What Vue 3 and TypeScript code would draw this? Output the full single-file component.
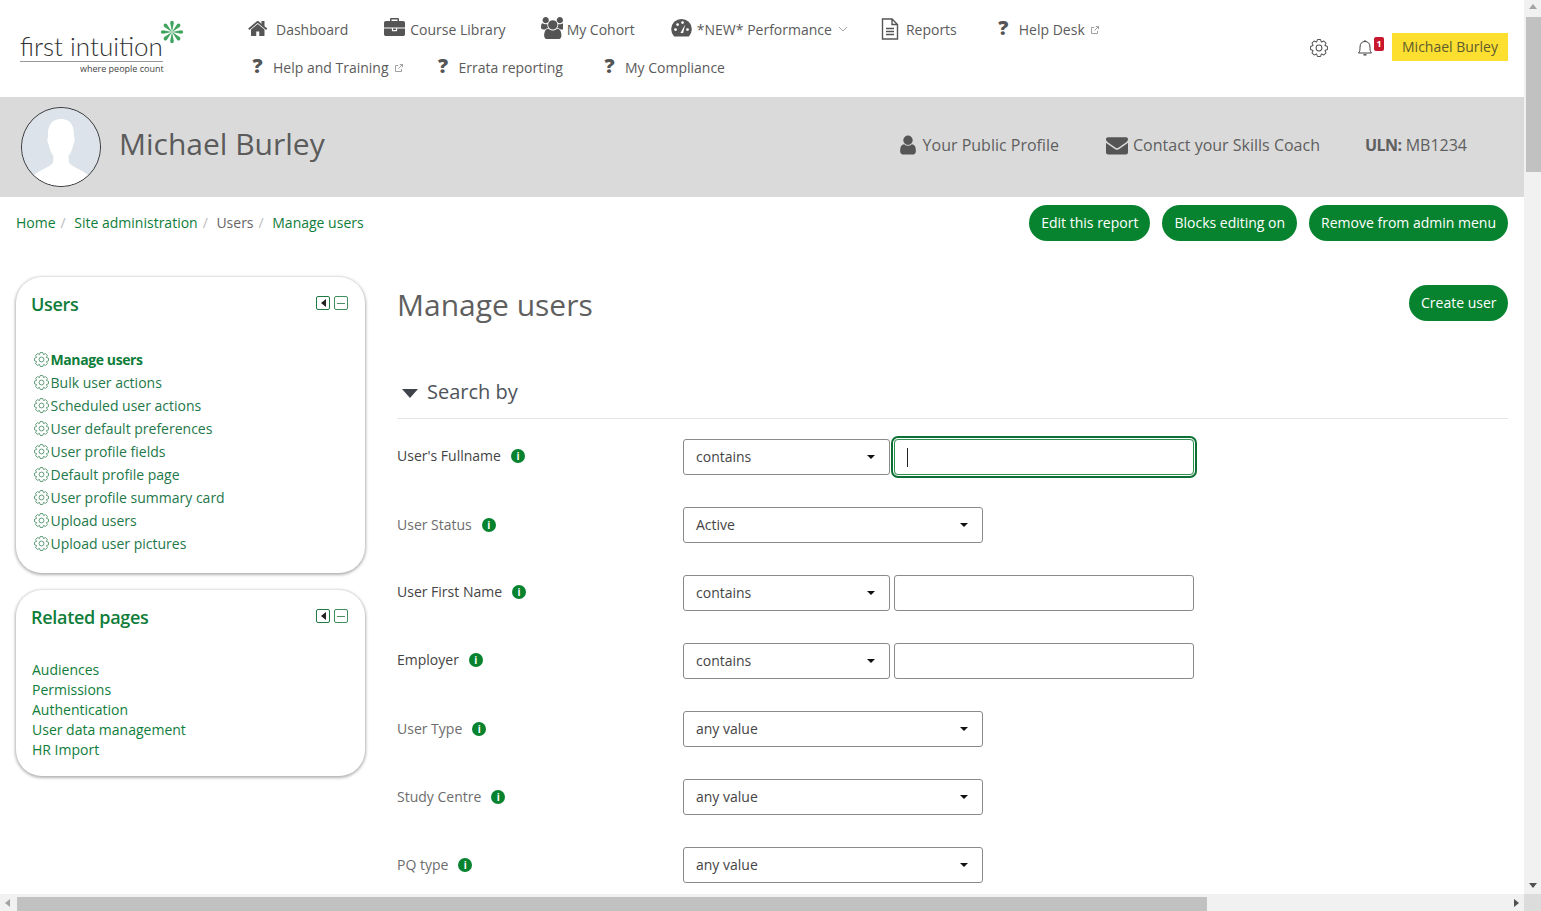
<script setup lang="ts">
type Icon = 'home' | 'case' | 'users' | 'gauge' | 'file' | 'q'
interface NavItem { label: string; icon: Icon; cls: string; ext?: boolean; caret?: boolean }
interface Row { label: string; info: string; dim?: boolean; op?: string; value?: string; focus?: boolean }

const paths: Record<string, string> = {
  home: 'M1408 992v480q0 26-19 45t-45 19h-384v-384h-256v384h-384q-26 0-45-19t-19-45v-480q0-1 .5-3t.5-3l575-474 575 474q1 2 1 6zm223-69l-62 74q-8 9-21 11h-3q-13 0-21-7l-692-577-692 577q-12 8-24 7-13-2-21-11l-62-74q-8-10-7-23.500t11-21.500l719-599q32-26 76-26t76 26l244 204v-195q0-14 9-23t23-9h192q14 0 23 9t9 23v408l219 182q10 8 11 21.500t-7 23.500z',
  case: 'M640 256h512v-128h-512v128zm1152 640v480q0 66-47 113t-113 47h-1472q-66 0-113-47t-47-113v-480h672v160q0 26 19 45t45 19h320q26 0 45-19t19-45v-160h672zm-768 0v128h-256v-128h256zm768-480v384h-1792v-384q0-66 47-113t113-47h352v-160q0-40 28-68t68-28h576q40 0 68 28t28 68v160h352q66 0 113 47t47 113z',
  users: 'M593 896q-162 5-265 128h-134q-82 0-138-40.500t-56-118.500q0-353 124-353 6 0 43.500 21t97.500 42.500 119 21.500q67 0 133-23-5 37-5 66 0 139 81 256zm1071 637q0 120-73 189.500t-194 69.500h-874q-121 0-194-69.500t-73-189.500q0-53 3.500-103.500t14-109 26.500-108.500 43-97.500 62-81 85.500-53.500 111.500-20q10 0 43 21.500t73 48 107 48 135 21.500 135-21.500 107-48 73-48 43-21.500q61 0 111.500 20t85.500 53.500 62 81 43 97.500 26.500 108.500 14 109 3.500 103.500zm-1024-1277q0 106-75 181t-181 75-181-75-75-181 75-181 181-75 181 75 75 181zm704 384q0 159-112.500 271.500t-271.500 112.500-271.500-112.500-112.500-271.500 112.500-271.500 271.500-112.500 271.500 112.500 112.500 271.500zm576 225q0 78-56 118.500t-138 40.500h-134q-103-123-265-128 81-117 81-256 0-29-5-66 66 23 133 23 59 0 119-21.500t97.500-42.500 43.500-21q124 0 124 353zm-128-609q0 106-75 181t-181 75-181-75-75-181 75-181 181-75 181 75 75 181z',
  envelope: 'M1792 710v794q0 66-47 113t-113 47h-1472q-66 0-113-47t-47-113v-794q44 49 101 87 362 246 497 345 57 42 92.500 65.500t94.500 48 110 24.500h2q51 0 110-24.500t94.500-48 92.500-65.500q170-123 498-345 57-39 100-87zm0-294q0 79-49 151t-122 123q-376 261-468 325-10 7-42.500 30.500t-54 38-52 32.500-57.500 27-50 9h-2q-23 0-50-9t-57.500-27-52-32.500-54-38-42.500-30.500q-91-64-262-182.500t-205-142.500q-62-42-117-115.500t-55-136.500q0-78 41.500-130t118.500-52h1472q65 0 112.500 47t47.500 113z',
  user: 'M1536 1399q0 109-62.500 187t-150.500 78h-854q-88 0-150.500-78t-62.500-187q0-85 8.500-160.500t31.500-152 58.500-131 94-89 134.500-34.500q131 128 313 128t313-128q76 0 134.500 34.500t94 89 58.500 131 31.500 152 8.500 160.500zm-256-887q0 159-112.500 271.500t-271.500 112.500-271.500-112.500-112.500-271.500 112.500-271.500 271.500-112.500 271.500 112.500 112.500 271.500z',
}

function gear(): string {
  const pts: string[] = []
  const teeth = 8
  for (let i = 0; i < teeth; i++) {
    const a = (i / teeth) * Math.PI * 2 - Math.PI / 2
    const step = (Math.PI * 2) / teeth
    const list: [number, number][] = [[5.7, -0.5], [7.6, -0.22], [7.6, 0.22], [5.7, 0.5]]
    for (const [r, o] of list) {
      const t = a + o * step
      pts.push(`${(8 + r * Math.cos(t)).toFixed(2)} ${(8 + r * Math.sin(t)).toFixed(2)}`)
    }
  }
  return 'M' + pts.join('L') + 'Z'
}
const gearPath = gear()

const spokes = [0, 45, 90, 135, 180, 225, 270, 315]

const navRow1: NavItem[] = [
  { label: 'Dashboard', icon: 'home', cls: 'i-home' },
  { label: 'Course Library', icon: 'case', cls: 'i-case' },
  { label: 'My Cohort', icon: 'users', cls: 'i-users' },
  { label: '*NEW* Performance', icon: 'gauge', cls: 'i-gauge', caret: true },
  { label: 'Reports', icon: 'file', cls: 'i-file' },
  { label: 'Help Desk', icon: 'q', cls: 'i-q', ext: true },
]
const navRow2: NavItem[] = [
  { label: 'Help and Training', icon: 'q', cls: 'i-q', ext: true },
  { label: 'Errata reporting', icon: 'q', cls: 'i-q' },
  { label: 'My Compliance', icon: 'q', cls: 'i-q' },
]
const adminLinks = [
  'Manage users', 'Bulk user actions', 'Scheduled user actions', 'User default preferences',
  'User profile fields', 'Default profile page', 'User profile summary card', 'Upload users', 'Upload user pictures',
]
const related = ['Audiences', 'Permissions', 'Authentication', 'User data management', 'HR Import']
const rows: Row[] = [
  { label: "User's Fullname", info: 'a', op: 'contains', focus: true },
  { label: 'User Status', info: 'b', dim: true, value: 'Active' },
  { label: 'User First Name', info: 'c', op: 'contains' },
  { label: 'Employer', info: 'd', op: 'contains' },
  { label: 'User Type', info: 'e', dim: true, value: 'any value' },
  { label: 'Study Centre', info: 'f', dim: true, value: 'any value' },
  { label: 'PQ type', info: 'g', dim: true, value: 'any value' },
]
</script>

<template>
  <div class="window">
    <div class="page">
      <header class="topbar">
        <div class="logo">
          <div class="logo-word">first intuition</div>
          <div class="logo-tag">where people count</div>
          <svg class="logo-star" viewBox="0 0 24 24" width="24" height="24">
            <g v-for="a in spokes" :key="a" :transform="`rotate(${a} 12 12)`">
              <path d="M12 12 L10.200 3 A1.800 2.200 0 1 1 13.800 3 Z" fill="#3fa45f" />
            </g>
          </svg>
        </div>
        <nav class="nav">
          <div v-for="(navRow, ri) in [navRow1, navRow2]" :key="ri" class="nav-row" :class="`nav-row-${ri}`">
            <a v-for="item in navRow" :key="item.label" class="nav-item" :class="item.cls">
              <svg v-if="item.icon === 'home' || item.icon === 'case' || item.icon === 'users'" class="nav-icon" viewBox="0 0 1792 1792">
                <path :d="paths[item.icon]" fill="#555" />
              </svg>
              <svg v-else-if="item.icon === 'gauge'" class="nav-icon" viewBox="0 0 20 20">
                <path d="M3 17.500 A9.800 9.800 0 1 1 17 17.500 Z" fill="#555" />
                <circle cx="4.300" cy="11" r="1.300" fill="#fff" />
                <circle cx="6.300" cy="6.300" r="1.300" fill="#fff" />
                <circle cx="11" cy="4.300" r="1.300" fill="#fff" />
                <circle cx="15.700" cy="11" r="1.300" fill="#fff" />
                <path d="M9 14 L13.500 6.500 L11.500 14.500 Z" fill="#fff" />
              </svg>
              <svg v-else-if="item.icon === 'file'" class="nav-icon file" viewBox="0 0 18 22">
                <path d="M1.500 1 H11 L16.500 6.500 V21 H1.500 Z M11 1 V6.500 H16.500" fill="none" stroke="#555" stroke-width="1.400" />
                <path d="M5 10.500 H13 M5 13.500 H13 M5 16.500 H13" stroke="#555" stroke-width="1.400" />
              </svg>
              <span v-else class="q-glyph">?</span>
              <span>{{ item.label }}</span>
              <svg v-if="item.ext" class="ext" viewBox="0 0 10 10" width="10" height="10">
                <path d="M7.500 5.800 V8.500 H1.500 V2.500 H4.200 M4.500 5.500 L8.500 1.500 M5.800 1.500 H8.500 V4.200" fill="none" stroke="#888" stroke-width="0.800" />
              </svg>
              <svg v-if="item.caret" class="chev" viewBox="0 0 10 6" width="10" height="6">
                <path d="M1 1 L5 5 L9 1" fill="none" stroke="#999" stroke-width="0.900" />
              </svg>
            </a>
          </div>
        </nav>
        <div class="top-right">
          <svg class="top-gear" viewBox="0 0 16 16" width="18" height="18">
            <path :d="gearPath" fill="none" stroke="#555" stroke-width="0.900" stroke-linejoin="round" />
            <circle cx="8" cy="8" r="2.600" fill="none" stroke="#555" stroke-width="0.900" />
          </svg>
          <div class="bell-wrap">
            <svg viewBox="0 0 16 18" width="16" height="18">
              <path d="M1.500 14 C3 12.500 3 10.500 3 8 C3 4.500 5 2.500 8 2.500 C11 2.500 13 4.500 13 8 C13 10.500 13 12.500 14.500 14 Z" fill="none" stroke="#444" stroke-width="1" stroke-linejoin="round" />
              <path d="M6.500 15.800 H9.500" stroke="#444" stroke-width="1.400" />
              <path d="M8 1 V2.500" stroke="#444" stroke-width="1" />
            </svg>
            <span class="badge">1</span>
          </div>
          <a class="user-chip">Michael Burley</a>
        </div>
      </header>

      <section class="profile">
        <div class="avatar">
          <svg viewBox="0 0 78 78" width="78" height="78">
            <circle cx="39" cy="39" r="39" fill="#dde3ea" />
            <path d="M39 11 C28 11 25.500 20 26 29 C25 30 25 33 26.500 36 C28 43 30 46 31.500 48 L31 55 C26 60 17 62 11 68 C18 74 28 78 39 78 C50 78 60 74 67 68 C61 62 52 60 47 55 L46.500 48 C48 46 50 43 51.500 36 C53 33 53 30 52 29 C52.500 20 50 11 39 11 Z" fill="#fff" />
          </svg>
        </div>
        <h1 class="profile-name">Michael Burley</h1>
        <div class="profile-links">
          <a class="plink p1">
            <svg viewBox="0 0 1792 1792" width="22" height="22"><path :d="paths.user" fill="#555" /></svg>
            <span>Your Public Profile</span>
          </a>
          <a class="plink p2">
            <svg viewBox="0 0 1792 1792" width="22" height="22"><path :d="paths.envelope" fill="#555" /></svg>
            <span>Contact your Skills Coach</span>
          </a>
          <span class="plink uln"><b>ULN:</b> MB1234</span>
        </div>
      </section>

      <div class="crumbs-row">
        <ol class="crumbs">
          <li><a>Home</a></li>
          <li><a>Site administration</a></li>
          <li class="plain">Users</li>
          <li><a>Manage users</a></li>
        </ol>
        <div class="actions">
          <button class="pill">Edit this report</button>
          <button class="pill">Blocks editing on</button>
          <button class="pill">Remove from admin menu</button>
        </div>
      </div>

      <div class="main">
        <aside class="side">
          <section class="block block-users">
            <div class="block-head">
              <h2>Users</h2>
              <div class="block-ctl">
                <span class="ctl dark"><i class="tri"></i></span>
                <span class="ctl"><i class="dash"></i></span>
              </div>
            </div>
            <ul class="admin-list">
              <li v-for="(l, i) in adminLinks" :key="l" :class="{ active: i === 0 }">
                <svg viewBox="0 0 16 16" width="15" height="15">
                  <path :d="gearPath" fill="none" stroke="#2f7d4d" stroke-width="0.800" stroke-linejoin="round" />
                  <circle cx="8" cy="8" r="2.600" fill="none" stroke="#2f7d4d" stroke-width="0.800" />
                </svg>
                <a>{{ l }}</a>
              </li>
            </ul>
          </section>
          <section class="block block-related">
            <div class="block-head">
              <h2>Related pages</h2>
              <div class="block-ctl">
                <span class="ctl dark"><i class="tri"></i></span>
                <span class="ctl"><i class="dash"></i></span>
              </div>
            </div>
            <ul class="rel-list">
              <li v-for="r in related" :key="r"><a>{{ r }}</a></li>
            </ul>
          </section>
        </aside>

        <main class="content">
          <div class="content-head">
            <h2 class="title">Manage users</h2>
            <button class="pill">Create user</button>
          </div>
          <div class="legend">
            <i class="legend-tri"></i>
            <span>Search by</span>
          </div>
          <form class="form" @submit.prevent>
            <div v-for="row in rows" :key="row.label" class="form-row">
              <div class="form-label" :class="{ dim: row.dim }">
                <span>{{ row.label }}</span>
                <span class="info">i</span>
              </div>
              <div class="controls">
                <template v-if="row.op">
                  <div class="select narrow"><span>{{ row.op }}</span><i class="caret"></i></div>
                  <div class="input" :class="{ focus: row.focus }"><i v-if="row.focus" class="text-cursor"></i></div>
                </template>
                <div v-else class="select wide"><span>{{ row.value }}</span><i class="caret"></i></div>
              </div>
            </div>
          </form>
        </main>
      </div>
    </div>

    <div class="vbar">
      <i class="arrow up"></i>
      <div class="vthumb"></div>
      <i class="arrow down"></i>
    </div>
    <div class="hbar">
      <i class="arrow left"></i>
      <div class="hthumb"></div>
      <i class="arrow right"></i>
    </div>
    <div class="corner"></div>
  </div>
</template>

<style scoped>
.window {
  width: 1541px;
  height: 911px;
  display: grid;
  grid-template-columns: 1524px 17px;
  grid-template-rows: 894px 17px;
  overflow: hidden;
  background: #fff;
  font-family: "Open Sans", "Liberation Sans", sans-serif;
  font-size: 14px;
  color: #555;
}
.page { overflow: hidden; min-width: 0; }
a { color: inherit; text-decoration: none; }
h1, h2, ul, ol { margin: 0; padding: 0; list-style: none; font-weight: 400; }

/* top bar */
.topbar { height: 97px; display: flex; background: #fff; position: relative; }
.logo { width: 248px; flex: none; position: relative; }
.logo-word {
  position: absolute; left: 20px; top: 29px;
  font-family: Lato, "Open Sans", sans-serif; font-weight: 300; font-size: 26px; line-height: 34px;
  color: #333; white-space: nowrap; border-bottom: 1px solid #999; height: 32px; width: 143px;
}
.logo-tag {
  position: absolute; left: 80px; top: 63px; font-size: 9px; line-height: 12px; color: #444; white-space: nowrap;
}
.logo-star { position: absolute; left: 160px; top: 20px; }
.nav { padding-top: 10px; }
.nav-row { display: flex; height: 38px; align-items: center; }
.nav-row-0 { gap: 36px; }
.nav-row-1 { padding-left: 4px; gap: 34px; }
.nav-item { display: flex; align-items: center; color: #5b5b5b; white-space: nowrap; font-size: 14px; }
.nav-icon { width: 21px; height: 21px; flex: none; margin-right: 5px; }
.i-home .nav-icon { margin-right: 7px; margin-top: -1px; }
.i-case .nav-icon { margin-top: -1px; }
.i-users { margin-left: -1px; }
.i-users .nav-icon { width: 22px; height: 22px; margin-right: 4px; margin-top: -2px; }
.i-gauge .nav-icon { margin-top: -1px; }
.nav-icon.file { width: 18px; height: 22px; margin-right: 7px; margin-top: -1px; }
.i-file { margin-left: -3px; }
.q-glyph {
  width: 11px; margin-right: 10px; font-weight: 800; font-size: 20px; color: #555; text-align: center; line-height: 20px; margin-top: -3px;
}
.nav-row-0 .i-q { margin-left: 5px; }
.nav-row-1 .i-q:last-child { margin-left: 7px; }
.ext { margin-left: 5px; margin-top: 2px; }
.chev { margin-left: 6px; }

.top-right { position: absolute; top: 33px; right: 16px; display: flex; align-items: flex-start; }
.top-gear { margin-right: 29px; margin-top: 6px; }
.bell-wrap { position: relative; width: 35px; height: 28px; padding-top: 6px; box-sizing: border-box; }
.badge {
  position: absolute; left: 17px; top: 4px; width: 10px; height: 14px; background: #c9172d; border-radius: 2px;
  color: #fff; font-size: 9px; font-weight: 700; line-height: 14px; text-align: center;
}
.user-chip {
  width: 116px; height: 28px; line-height: 28px; text-align: center; background: #fde02f; color: #5d5a30; font-size: 14px;
}

/* profile */
.profile { height: 100px; background: #dadada; display: flex; align-items: center; padding-left: 21px; box-sizing: border-box; }
.avatar {
  width: 80px; height: 80px; box-sizing: border-box; border: 1px solid #33363b; border-radius: 50%; overflow: hidden; flex: none;
}
.avatar svg { display: block; }
.profile-name { margin-left: 18px; font-size: 30px; color: #5b5b5b; white-space: nowrap; margin-top: -8px; }
.profile-links { margin-left: auto; display: flex; align-items: center; font-size: 16px; color: #5f5f5f; padding-right: 57px; margin-top: -4px; }
.plink { display: flex; align-items: center; white-space: nowrap; }
.p1 { gap: 4px; margin-right: 47px; }
.p2 { gap: 5px; margin-right: 45px; }
.uln b { font-weight: 700; margin-right: 4px; letter-spacing: -0.500px; }

/* crumbs */
.crumbs-row { display: flex; justify-content: space-between; align-items: center; padding: 8px 16px 0; height: 36px; }
.crumbs { display: flex; color: #0f7d3a; font-size: 14px; margin-top: -2px; }
.crumbs li { display: flex; white-space: nowrap; }
.crumbs li + li::before { content: "/"; color: #bbb; padding: 0 8.600px 0 5px; }
.crumbs .plain { color: #666; }
.actions { display: flex; gap: 12px; }
.pill {
  height: 36px; padding: 0 12px 2px; border: none; border-radius: 18px; background: #07832f; color: #fff;
  font: 400 14px "Open Sans", "Liberation Sans", sans-serif; white-space: nowrap;
}

/* main */
.main { display: flex; gap: 31px; padding: 36px 16px 0; align-items: flex-start; }
.side { width: 350px; flex: none; display: flex; flex-direction: column; gap: 17px; }
.block {
  box-sizing: border-box; width: 349px; border-radius: 26px; background: #fff; box-shadow: 0 1px 3px 1px rgba(0, 0, 0, 0.3);
  padding: 0 17px 0 15px;
}
.block-users { height: 296px; }
.block-related { height: 186px; }
.block-head { display: flex; justify-content: space-between; align-items: center; height: 55px; }
.block-head h2 { font-size: 18px; font-weight: 600; color: #0f7d3a; letter-spacing: -0.300px; margin-top: -2px; }
.block-ctl { display: flex; gap: 4px; margin-top: -3px; }
.ctl { width: 14px; height: 14px; box-sizing: border-box; border: 1px solid #3f8f5e; border-radius: 2px; display: flex; align-items: center; justify-content: center; }
.ctl.dark { border-color: #1d7a42; }
.tri { border: 4px solid transparent; border-right: 5px solid #222; border-left: 0; }
.dash { width: 8px; height: 1px; background: #4a8f65; }
.admin-list { padding: 16px 0 0 3px; }
.admin-list li { height: 23px; display: flex; align-items: center; gap: 1.500px; color: #23784a; white-space: nowrap; }
.admin-list li.active { font-weight: 700; color: #0f7d3a; letter-spacing: -0.400px; }
.rel-list { padding: 15px 0 0 1px; }
.rel-list li { height: 20px; line-height: 20px; color: #0f7d3a; }

.content { flex: 1; min-width: 0; }
.content-head { display: flex; justify-content: space-between; align-items: center; height: 54px; margin-top: 1px; }
.content-head .pill { margin-top: -4px; padding: 0 11.500px 2px; }
.title { font-size: 30px; color: #5f5f5f; margin-top: -2px; }
.legend {
  display: flex; align-items: center; margin-top: 33px; height: 54px; padding-bottom: 1px; box-sizing: border-box;
  border-bottom: 1px solid #e4e4e4; font-size: 20px; color: #4f555a;
}
.legend-tri { border: 8px solid transparent; border-top: 9px solid #3f444a; border-bottom: 0; margin: 5px 9px 0 5px; }
.form { padding-top: 20px; }
.form-row { display: flex; height: 68px; }
.form-label { width: 286px; flex: none; display: flex; align-items: center; height: 36px; color: #444; margin-top: -2px; white-space: nowrap; }
.form-label.dim { color: #6d6d6d; margin-top: -1px; }
.info {
  width: 14px; height: 14px; border-radius: 50%; background: #07832f; color: #fff; font-size: 10px; font-weight: 700;
  line-height: 14px; text-align: center; margin-left: 10px; margin-top: 1px;
}
.controls { display: flex; gap: 4px; height: 36px; }
.select {
  box-sizing: border-box; height: 36px; border: 1px solid #8a8a8a; border-radius: 3px; display: flex; align-items: center;
  justify-content: space-between; padding: 0 14px 0 12px; color: #444; background: #fff;
}
.select span { margin-top: -2px; }
.select.narrow { width: 207px; }
.select.wide { width: 300px; }
.caret { border: 4px solid transparent; border-top: 4px solid #111; border-bottom: 0; }
.input {
  box-sizing: border-box; width: 300px; height: 36px; border: 1px solid #8a8a8a; border-radius: 3px; display: flex; align-items: center;
  padding-left: 12px;
}
.input.focus { border-color: #2d8f4d; box-shadow: 0 0 0 1px #fff, 0 0 0 3px #0c6f33; border-radius: 4px; }
.text-cursor { width: 1px; height: 19px; background: #222; }

/* scrollbars */
.vbar { grid-column: 2; grid-row: 1; background: #f1f1f1; display: flex; flex-direction: column; align-items: center; }
.vthumb { width: 15px; height: 155px; margin: 8px 0 0 2px; background: #c1c1c1; }
.hbar { grid-column: 1; grid-row: 2; background: #f1f1f1; display: flex; align-items: center; padding: 0 5px; box-sizing: border-box; }
.hthumb { width: 1190px; height: 14px; margin-left: 7px; margin-top: 2px; background: #c1c1c1; }
.corner { grid-column: 2; grid-row: 2; background: #dcdcdc; }
.arrow { display: block; width: 0; height: 0; flex: none; }
.up { border: 4px solid transparent; border-bottom: 5px solid #a3a3a3; border-top: 0; margin-top: 4px; }
.down { border: 4px solid transparent; border-top: 5px solid #505050; border-bottom: 0; margin-top: auto; margin-bottom: 6px; }
.left { border: 4px solid transparent; border-right: 5px solid #a3a3a3; border-left: 0; }
.right { border: 4px solid transparent; border-left: 5px solid #505050; border-right: 0; margin-left: auto; }
</style>

<style>
html, body { margin: 0; overflow: hidden; background: #fff; }
</style>
